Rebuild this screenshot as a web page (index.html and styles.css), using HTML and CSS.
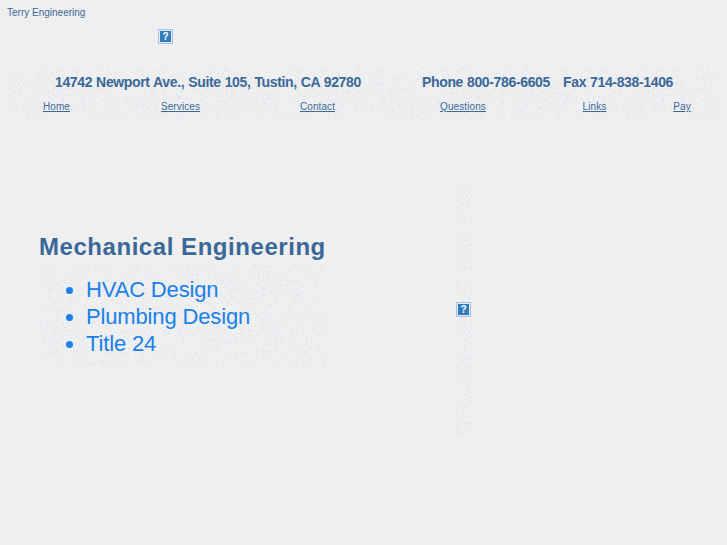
FILE: index.html
```html
<!DOCTYPE html>
<html lang="en">
<head>
  <meta charset="UTF-8">
  <meta name="viewport" content="width=device-width, initial-scale=1.0">
  <title>Terry Engineering</title>
  <link rel="stylesheet" href="styles.css">
</head>
<body>
  <header class="top">
    <div class="site-name">Terry Engineering</div>
    <div class="logo-slot">
      <svg class="broken-img" viewBox="0 0 15 15" role="img" aria-label="?">
        <rect x="0.5" y="0.5" width="14" height="14" fill="#e4edf6" stroke="#a9c3de"/>
        <rect x="2" y="2" width="11" height="11" fill="#2f7cc0"/>
        <text x="7.5" y="11.2" text-anchor="middle" class="broken-mark">?</text>
      </svg>
    </div>
  </header>

  <section class="band">
    <div class="contact-row">
      <span class="address">14742 Newport Ave., Suite 105, Tustin, CA 92780</span>
      <span class="phone">Phone 800-786-6605</span>
      <span class="fax">Fax 714-838-1406</span>
    </div>
    <nav class="nav-row">
      <a href="#">Home</a>
      <a href="#">Services</a>
      <a href="#">Contact</a>
      <a href="#">Questions</a>
      <a href="#">Links</a>
      <a href="#">Pay</a>
    </nav>
  </section>

  <main class="content">
    <div class="left-col">
      <h1>Mechanical Engineering</h1>
      <ul class="service-list speckle">
        <li>HVAC Design</li>
        <li>Plumbing Design</li>
        <li>Title 24</li>
      </ul>
    </div>
    <div class="side-col speckle">
      <svg class="broken-img" viewBox="0 0 15 15" role="img" aria-label="?">
        <rect x="0.5" y="0.5" width="14" height="14" fill="#e4edf6" stroke="#a9c3de"/>
        <rect x="2" y="2" width="11" height="11" fill="#2f7cc0"/>
        <text x="7.5" y="11.2" text-anchor="middle" class="broken-mark">?</text>
      </svg>
    </div>
  </main>
</body>
</html>
```

FILE: styles.css
```css
html, body {
  margin: 0;
  padding: 0;
}
body {
  background: #efefef;
  color: #3a6899;
  font-family: "Liberation Sans", Arial, sans-serif;
}
a {
  color: #3a6899;
}

/* top */
.top {
  height: 68px;
}
.site-name {
  padding: 7px 0 0 7px;
  font-size: 10px;
  line-height: 12px;
}
.logo-slot {
  padding: 10px 0 0 158px;
}
.broken-img {
  display: block;
  width: 15px;
  height: 15px;
}
.broken-mark {
  fill: #fff;
  font-family: "Liberation Sans", Arial, sans-serif;
  font-size: 10px;
  font-weight: bold;
}

/* speckled texture: thresholded svg noise */
.speckle, .band {
  background-color: #efefef;
  background-image: url("data:image/svg+xml,%3Csvg xmlns='http://www.w3.org/2000/svg' width='300' height='300'%3E%3Cfilter id='n' x='0' y='0' width='100%25' height='100%25' color-interpolation-filters='sRGB'%3E%3CfeTurbulence type='fractalNoise' baseFrequency='1.4' numOctaves='1' seed='4' stitchTiles='stitch'/%3E%3CfeColorMatrix values='0 0 0 0 .85 0 0 0 0 .89 0 0 0 0 .95 30 0 0 0 -19'/%3E%3C/filter%3E%3Crect width='300' height='300' filter='url(%23n)'/%3E%3C/svg%3E");
}

/* address + nav band */
.band {
  margin-left: 8px;
  width: 712px;
  height: 52px;
}
.contact-row {
  display: flex;
  padding: 6px 0 0 47px;
  font-size: 14px;
  font-weight: bold;
  line-height: 17px;
  letter-spacing: -0.35px;
  word-spacing: 0.4px;
}
.address {
  width: 367px;
}
.phone {
  width: 141px;
}
.nav-row {
  display: grid;
  grid-template-columns: 97px 151px 123px 168px 95px 80px;
  margin-top: 10px;
  font-size: 10px;
  letter-spacing: 0.1px;
  line-height: 12px;
  text-align: center;
}

/* main content */
.content {
  display: flex;
  align-items: flex-start;
  padding: 60px 0 0 38px;
}
.left-col {
  width: 288px;
  padding-top: 53px;
}
h1 {
  margin: 0 0 4px 1px;
  font-size: 24px;
  letter-spacing: 0.55px;
  line-height: 28px;
  white-space: nowrap;
}
.service-list {
  margin: 0;
  padding: 11px 0 9px 48px;
  color: #1a80ea;
  font-size: 22px;
  letter-spacing: -0.15px;
  line-height: 27px;
}
.side-col {
  display: flex;
  align-items: center;
  width: 16px;
  height: 258px;
  margin-left: 130px;
}
```
